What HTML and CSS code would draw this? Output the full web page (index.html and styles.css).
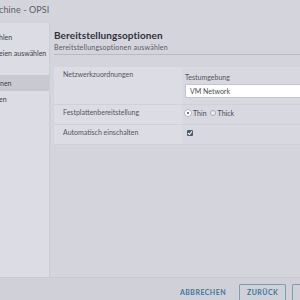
FILE: index.html
```html
<!DOCTYPE html>
<html lang="de">
<head>
    <meta charset="UTF-8">
    <title>Virtuelle Maschine klonen</title>
    <link rel="stylesheet" href="styles.css">
</head>
<body>
    <div class="wizard">
        <div class="titlebar">chine - OPSI</div>
        <div class="main">
            <ul class="steps">
                <li>hlen</li>
                <li>eien auswählen</li>
                <li class="spacer"></li>
                <li class="active">nen</li>
                <li>en</li>
            </ul>
            <div class="content">
                <h2 class="heading">Bereitstellungsoptionen</h2>
                <p class="subheading">Bereitstellungsoptionen auswählen</p>
                <div class="options">
                    <div class="row tall">
                        <div class="label">Netzwerkzuordnungen</div>
                        <div class="value">
                            <div class="field-label">Testumgebung</div>
                            <div class="select">VM Network</div>
                        </div>
                    </div>
                    <div class="row">
                        <div class="label">Festplattenbereitstellung</div>
                        <div class="value radios">
                            <span class="radio checked"></span>Thin
                            <span class="radio"></span>Thick
                        </div>
                    </div>
                    <div class="row">
                        <div class="label">Automatisch einschalten</div>
                        <div class="value">
                            <span class="checkbox">
                                <svg width="6" height="6" viewBox="0 0 6 6"><path d="M1 3.2 L2.4 4.5 L5 1.4" fill="none" stroke="#fff" stroke-width="1.1"/></svg>
                            </span>
                        </div>
                    </div>
                </div>
            </div>
        </div>
        <div class="footer">
            <button class="link">Abbrechen</button>
            <button class="outline">Zurück</button>
            <button class="outline">Weiter</button>
        </div>
    </div>
</body>
</html>
```

FILE: styles.css
```css
body {
    margin: 0;
    background: #d4d4dd;
    font-family: Lato, 'Open Sans', sans-serif;
    color: #55555e;
}

.wizard {
    width: 300px;
    height: 300px;
    overflow: hidden;
}

.titlebar {
    height: 23px;
    line-height: 20px;
    font-size: 9px;
    color: #5d5d66;
    margin-left: -1px;
    letter-spacing: 0.1px;
    white-space: nowrap;
}

.main {
    display: flex;
    height: 254px;
}

.steps {
    width: 49px;
    margin: 0;
    padding: 6px 0 0;
    list-style: none;
    background: #dcdce4;
    border-right: 1px solid #cdcdd6;
    white-space: nowrap;
    overflow: hidden;
}

.steps li {
    height: 16px;
    line-height: 16px;
    font-size: 7px;
    color: #3e3e46;
    margin-left: -1px;
}

.steps .spacer {
    height: 14px;
}

.steps .active {
    background: #c9c9d2;
    margin-left: 0;
}

.content {
    flex: 1;
    padding: 0 0 0 4px;
    overflow: hidden;
    white-space: nowrap;
}

.heading {
    margin: 6px 0 0;
    font-size: 10px;
    font-weight: 700;
    color: #303038;
    letter-spacing: 0.1px;
}

.subheading {
    margin: 2px 0 0;
    padding-bottom: 3px;
    font-size: 7px;
    letter-spacing: 0.2px;
    color: #5a5a62;
    border-bottom: 1px solid #b9b9c3;
}

.options {
    margin-top: 12px;
    width: 270px;
    background: #d8d8e0;
}

.row {
    display: flex;
    height: 19px;
    border-bottom: 1px solid #d0d0d9;
}

.row.tall {
    height: 37px;
}

.label {
    width: 119px;
    padding: 3px 0 0 9px;
    line-height: 9px;
    background: #dcdce4;
    font-size: 7px;
    color: #55555e;
}

.value {
    flex: 1;
    padding: 3px 0 0 3px;
    font-size: 7px;
}

.field-label {
    margin-top: 3px;
    line-height: 9px;
    font-size: 7px;
    color: #55555e;
}

.select {
    margin-top: 2px;
    height: 12px;
    line-height: 12px;
    padding-left: 4px;
    background: #fff;
    border: 1px solid #c4c4cc;
    color: #4a4a52;
}

.radios {
    display: flex;
    align-items: center;
    gap: 2px;
    height: 10px;
    color: #4a4a52;
}

.radio {
    width: 4px;
    height: 4px;
    border-radius: 50%;
    border: 1px solid #aaaab4;
    background: #ededf2;
    margin-left: 1px;
}

.radio.checked {
    border: 2px solid #fff;
    width: 2px;
    height: 2px;
    background: #4a4a52;
    box-shadow: 0 0 0 0.5px #9a9aa4;
    margin-left: 0;
}

.checkbox {
    display: inline-flex;
    align-items: center;
    justify-content: center;
    width: 6px;
    height: 6px;
    margin: 2px 0 0 2px;
    background: #4c5c6c;
    border-radius: 1px;
}

.footer {
    height: 23px;
    display: flex;
    align-items: center;
    gap: 6px;
    padding: 0 0 0 177px;
    border-top: 1px solid #c9c9d2;
    background: #d0d0d9;
    white-space: nowrap;
}

button {
    font-family: Lato, 'Open Sans', sans-serif;
    font-size: 7px;
    font-weight: 700;
    letter-spacing: 0.45px;
    text-transform: uppercase;
    color: #3b7a9a;
    background: none;
    cursor: pointer;
    height: 17px;
    margin-top: 5px;
}

button.link {
    border: none;
    padding: 0 7px 0 3px;
}

button.outline {
    border: 1px solid #7ba0b4;
    border-radius: 1px;
    padding: 0 7px;
    flex: none;
}
```
